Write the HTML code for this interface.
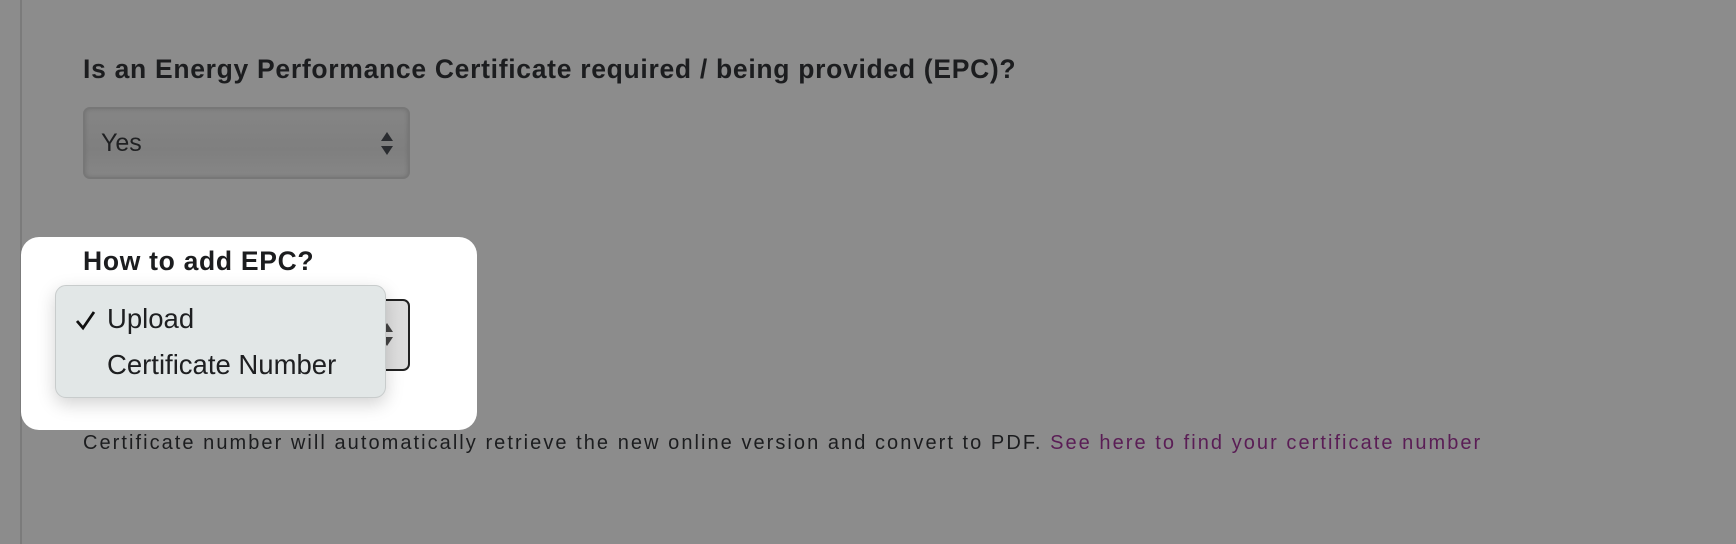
<!DOCTYPE html>
<html><head><meta charset="utf-8"><style>
html,body{margin:0;padding:0;width:1736px;height:544px;overflow:hidden;background:#8c8c8c;font-family:"Liberation Sans",Arial,sans-serif;}
.vl{position:absolute;left:20px;top:0;width:2px;height:544px;background:#7b7b7b;}
.h{position:absolute;left:83px;font-weight:bold;font-size:26.5px;letter-spacing:0.7px;color:#1c1d1f;white-space:nowrap;}
.sel{position:absolute;left:83px;width:327px;height:72px;border-radius:7px;box-sizing:border-box;}
.sel1{top:107px;border:2px solid #777;background:linear-gradient(#858585,#7f7f7f 60%,#868686);box-shadow:inset 0 0 4px rgba(0,0,0,.15);}
.sel1 span{position:absolute;left:16px;top:20px;font-size:25px;color:#1f2022;}
.arr{position:absolute;right:15px;width:0;height:0;border-left:6px solid transparent;border-right:6px solid transparent;}
.panel{position:absolute;left:21px;top:237px;width:456px;height:193px;background:#fff;border-radius:18px;}
.sel2{top:299px;border:2px solid #222;background:linear-gradient(90deg,#f4f4f4,#ddd);}
.menu{position:absolute;left:55px;top:285px;width:331px;height:113px;background:#e2e7e7;border:1px solid #c8cccc;border-radius:11px;box-sizing:border-box;box-shadow:0 6px 18px rgba(0,0,0,.18);}
.menu div{position:absolute;left:51px;font-size:27.5px;color:#1e1f21;white-space:nowrap;}
.help{position:absolute;left:83px;top:432px;font-size:20px;letter-spacing:2.05px;color:#1c1d1f;white-space:nowrap;}
.help a{color:#5a1d55;text-decoration:none;}
</style></head><body>
<div class="vl"></div>
<div class="h" style="top:54px">Is an Energy Performance Certificate required / being provided (EPC)?</div>
<div class="sel sel1"><span>Yes</span>
<div class="arr" style="top:23px;border-bottom:9px solid #2a2c30"></div>
<div class="arr" style="top:37px;border-top:9px solid #2a2c30"></div></div>
<div class="panel"></div>
<div class="h" style="top:246px">How to add EPC?</div>
<div class="sel sel2">
<div class="arr" style="top:22px;border-bottom:9px solid #444"></div>
<div class="arr" style="top:36px;border-top:9px solid #444"></div></div>
<div class="menu">
<svg style="position:absolute;left:19px;top:23px" width="22" height="22" viewBox="0 0 22 22"><path d="M2 12 L8 19 L19 3" fill="none" stroke="#111" stroke-width="2.8"/></svg>
<div style="top:17px">Upload</div>
<div style="top:63px">Certificate Number</div>
</div>
<div class="help">Certificate number will automatically retrieve the new online version and convert to PDF. <a>See here to find your certificate number</a></div>
</body></html>
